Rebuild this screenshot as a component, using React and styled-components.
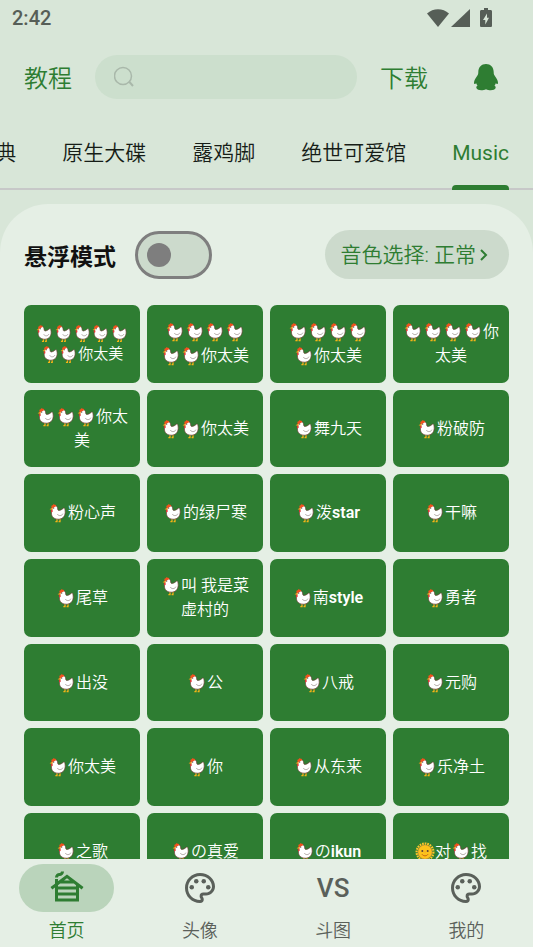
import React, { useState } from 'react';
import styled, { createGlobalStyle } from 'styled-components';
import { MdOutlineCabin, MdOutlinePalette } from 'react-icons/md';

const tabs = ['典', '原生大碟', '露鸡脚', '绝世可爱馆', 'Music'];

// each sound is a list of lines, 🐔 and 🌞 are swapped for drawn icons
const sounds = [
  { lines: ['🐔🐔🐔🐔🐔', '🐔🐔你太美'], small: true },
  { lines: ['🐔🐔🐔🐔', '🐔🐔你太美'] },
  { lines: ['🐔🐔🐔🐔', '🐔你太美'] },
  { lines: ['🐔🐔🐔🐔你', '太美'] },
  { lines: ['🐔🐔🐔你太', '美'] },
  { lines: ['🐔🐔你太美'] },
  { lines: ['🐔舞九天'] },
  { lines: ['🐔粉破防'] },
  { lines: ['🐔粉心声'] },
  { lines: ['🐔的绿尸寒'] },
  { lines: ['🐔泼star'] },
  { lines: ['🐔干嘛'] },
  { lines: ['🐔尾草'] },
  { lines: ['🐔叫 我是菜', '虚村的'] },
  { lines: ['🐔南style'] },
  { lines: ['🐔勇者'] },
  { lines: ['🐔出没'] },
  { lines: ['🐔公'] },
  { lines: ['🐔八戒'] },
  { lines: ['🐔元购'] },
  { lines: ['🐔你太美'] },
  { lines: ['🐔你'] },
  { lines: ['🐔从东来'] },
  { lines: ['🐔乐净土'] },
  { lines: ['🐔之歌'] },
  { lines: ['🐔の真爱'] },
  { lines: ['🐔のikun'] },
  { lines: ['🌞对🐔找'] },
];

const navs = [
  { label: '首页', icon: <MdOutlineCabin size={36} /> },
  { label: '头像', icon: <MdOutlinePalette size={36} /> },
  { label: '斗图', icon: 'VS' },
  { label: '我的', icon: <MdOutlinePalette size={36} /> },
];

const Chicken = () => (
  <Emoji viewBox="0 0 20 20" aria-label="鸡">
    <path d="M9 15.800v2.700M12 15.800v2.700M7.400 18.600h2.200M10.600 18.600h2" stroke="#f5b417" strokeWidth="1.300" fill="none" />
    <path
      d="M3.800 5.400C4.200 3.200 5.400 2.300 7 2.500c1.900.2 2.600 1.700 2.700 3.400 0 1.200.7 1.700 1.700 1.500 1.600-.3 2.600-1.100 3.700-2 .9-.7 1.700-.1 1.800.900.1 1 .5 2 .3 3.500-.5 4-3 6.400-6.800 6.400-4.300 0-7-2.500-7-6.300 0-1.900.8-2.800.4-4.500z"
      fill="#fff"
      stroke="#6d3b34"
      strokeWidth=".7"
    />
    <path d="M9.300 11c1.100 2.200 4.400 2.200 5.600-.3" fill="none" stroke="#a0938f" strokeWidth=".8" />
    <path d="M3.500 4.700C3 2.900 3.900 2.200 4.700 2.400 4.800 1.100 6.300.9 6.700 1.800c1.100-.5 1.800.5 1.300 1.500L4.500 5.200z" fill="#f4511e" />
    <path d="M4.600 4.600 1.600 6.300l2.900.7z" fill="#fb9b1c" />
    <path d="M3.500 6.700c-1.100.9-.7 2.500.4 2.500.9 0 1-1.400.5-2.300z" fill="#e53935" />
    <circle cx="5.700" cy="5.100" r=".6" fill="#3e2723" />
  </Emoji>
);

const Sun = () => (
  <Emoji viewBox="0 0 20 20" aria-label="太阳">
    <circle cx="10" cy="10" r="8.400" fill="none" stroke="#fdc52c" strokeWidth="2.200" strokeDasharray="1.700 .9" />
    <circle cx="10" cy="10" r="7" fill="#fcc21b" stroke="#f19534" strokeWidth=".6" />
    <circle cx="7.300" cy="9" r="1" fill="#5d4037" />
    <circle cx="12.700" cy="9" r="1" fill="#5d4037" />
    <path d="M9.300 9.500 10 11l.7-1.500" fill="#f19534" />
    <path d="M7 12.300c1.500 2 4.500 2 6 0" fill="none" stroke="#c65f13" strokeWidth="1" />
  </Emoji>
);

const renderLine = (line) =>
  line.split(/(🐔|🌞|[a-z]+)/u).map((part, i) => {
    if (part === '🐔') return <Chicken key={i} />;
    if (part === '🌞') return <Sun key={i} />;
    if (/^[a-z]+$/.test(part)) return <Latin key={i}>{part}</Latin>;
    return part;
  });

const App = () => {
  const [active, setActive] = useState('Music');
  const [page, setPage] = useState('首页');
  const [floating, setFloating] = useState(false);

  return (
    <Screen>
      <GlobalStyle />
      <StatusBar>
        <span>2:42</span>
        <StatusIcons>
          <svg width="22" height="20" viewBox="0 0 22 20">
            <path d="M0 5.500C6.200-.2 15.800-.2 22 5.500L11 19z" fill="currentColor" />
          </svg>
          <svg width="19" height="20" viewBox="0 0 19 20">
            <path d="M19 1v18H0z" fill="currentColor" />
          </svg>
          <Battery width="12" height="20" viewBox="0 0 12 20">
            <path
              fillRule="evenodd"
              d="M4 0h4v2h2.500C11.500 2 12 2.600 12 3.500v14c0 1-.5 1.500-1.500 1.500h-9C.5 19 0 18.500 0 17.500v-14C0 2.600.5 2 1.500 2H4zM7 5.500 3 12h2.300v4.500L9 9.700H7z"
              fill="currentColor"
            />
          </Battery>
        </StatusIcons>
      </StatusBar>

      <Header>
        <HeaderLink href="#guide">教程</HeaderLink>
        <SearchBar>
          <svg width="22" height="22" viewBox="0 0 22 22" fill="none" stroke="#a9b8aa" strokeWidth="1.500">
            <circle cx="9" cy="10" r="8.500" />
            <path d="M15 15.500 19 20" strokeWidth="2" />
          </svg>
          <SearchInput type="text" aria-label="搜索" />
        </SearchBar>
        <HeaderLink href="#download">下载</HeaderLink>
        <QqButton type="button" aria-label="QQ">
          <svg width="24" height="27" viewBox="0 0 24 27">
            <path
              d="M12 0c4.600 0 7.600 3.200 7.700 8 0 1.400.1 2.400.9 3.600 1.800 2.600 3.400 5 3.400 7.200 0 1.500-1 1.700-2.200.5-.3 1-.7 1.700-1.300 2.500 1.200.6 1.400 1.500 1 2.500-.7 2.300-6.500 2.500-9.500.9-3 1.600-8.800 1.400-9.500-.9-.4-1-.2-1.900 1-2.500-.6-.8-1-1.500-1.300-2.500C1 20.500 0 20.300 0 18.800c0-2.200 1.600-4.600 3.400-7.200.8-1.200.9-2.200.9-3.600C4.400 3.200 7.400 0 12 0z"
              fill="currentColor"
            />
          </svg>
        </QqButton>
      </Header>

      <Tabs>
        {tabs.map((tab) => (
          <Tab key={tab} type="button" $latin={tab === 'Music'} $active={tab === active} onClick={() => setActive(tab)}>
            {tab}
          </Tab>
        ))}
      </Tabs>

      <Panel>
        <Options>
          <FloatLabel>
            悬浮模式
            <Switch type="checkbox" role="switch" checked={floating} onChange={() => setFloating(!floating)} />
          </FloatLabel>
          <ToneButton type="button">
            音色选择: 正常
            <svg width="8" height="12" viewBox="0 0 8 12" fill="none" stroke="currentColor" strokeWidth="2">
              <path d="M1 1l5 5-5 5" />
            </svg>
          </ToneButton>
        </Options>

        <Grid>
          {sounds.map((sound, i) => (
            <Sound key={i} type="button" $small={sound.small}>
              {sound.lines.map((line) => (
                <SoundLine key={line} $small={sound.small}>
                  {renderLine(line)}
                </SoundLine>
              ))}
            </Sound>
          ))}
        </Grid>
      </Panel>

      <BottomNav>
        {navs.map(({ label, icon }) => (
          <NavItem key={label} type="button" $active={label === page} onClick={() => setPage(label)}>
            <NavIcon $active={label === page}>{icon}</NavIcon>
            {label}
          </NavItem>
        ))}
      </BottomNav>
    </Screen>
  );
};

export default App;

const GlobalStyle = createGlobalStyle`
  * {
    box-sizing: border-box;
  }
  body {
    margin: 0;
    background: #d8e6d8;
    font-family: Roboto, 'Noto Sans CJK SC', sans-serif;
    font-weight: 350;
  }
  button, input {
    font-family: inherit;
    font-weight: inherit;
    border: none;
    padding: 0;
    background: none;
  }
`;

const Screen = styled.div`
  display: flex;
  flex-direction: column;
  height: 100vh;
  overflow: hidden;
`;

const StatusBar = styled.div`
  display: flex;
  justify-content: space-between;
  align-items: center;
  height: 36px;
  flex-shrink: 0;
  padding: 0 41px 0 12px;
  font-size: 20px;
  font-weight: 500;
  color: #565e57;
`;

const StatusIcons = styled.div`
  display: flex;
  align-items: center;
  gap: 2px;
`;

const Battery = styled.svg`
  margin-left: 8px;
`;

const Header = styled.header`
  display: flex;
  align-items: center;
  gap: 23px;
  height: 82px;
  flex-shrink: 0;
  padding: 0 12px 0 24px;
`;

const HeaderLink = styled.a`
  padding-top: 4px;
  font-size: 24px;
  line-height: 32px;
  color: #2e7d32;
  text-decoration: none;
  white-space: nowrap;
`;

const SearchBar = styled.label`
  display: flex;
  align-items: center;
  flex: 1;
  min-width: 0;
  height: 44px;
  padding: 0 19px;
  border-radius: 22px;
  background: #ccdfcd;
`;

const SearchInput = styled.input`
  flex: 1;
  min-width: 0;
  padding: 0 8px;
  font-size: 20px;
  &:focus {
    outline: none;
  }
`;

const QqButton = styled.button`
  display: flex;
  justify-content: center;
  width: 70px;
  color: #2e7d32;
`;

const Tabs = styled.nav`
  display: flex;
  justify-content: flex-end;
  gap: 46px;
  height: 72px;
  flex-shrink: 0;
  padding: 0 24px;
  overflow: hidden;
  box-shadow: inset 0 -2px #c7c8c8;
`;

const Tab = styled.button`
  display: flex;
  flex-direction: column;
  flex-shrink: 0;
  padding-top: 19px;
  font-size: 21px;
  font-weight: ${(props) => (props.$latin ? 400 : 350)};
  line-height: 32px;
  color: ${(props) => (props.$active ? '#2e7d32' : '#161d17')};
  &::after {
    content: '';
    width: 100%;
    height: 5px;
    margin-top: auto;
    border-radius: 4px 4px 0 0;
    background: ${(props) => (props.$active ? '#2e7d32' : 'transparent')};
  }
`;

const Panel = styled.main`
  flex: 1;
  min-height: 0;
  margin-top: 14px;
  padding: 26px 24px 0;
  overflow-y: auto;
  scrollbar-width: none;
  border-radius: 48px 48px 0 0;
  background: #e5efe5;
`;

const Options = styled.div`
  display: flex;
  justify-content: space-between;
  align-items: center;
  margin-bottom: 26px;
`;

const FloatLabel = styled.label`
  display: flex;
  align-items: center;
  gap: 19px;
  font-size: 23px;
  font-weight: bold;
  color: #111;
`;

const Switch = styled.input`
  appearance: none;
  display: flex;
  align-items: center;
  width: 77px;
  height: 48px;
  margin: 0;
  padding: 0 9px;
  border: 3px solid #7e7e7e;
  border-radius: 24px;
  background: #ccdacc;
  &::before {
    content: '';
    width: 24px;
    height: 24px;
    border-radius: 50%;
    background: #7e7e7e;
  }
  &:checked {
    justify-content: flex-end;
  }
`;

const ToneButton = styled.button`
  display: flex;
  align-items: center;
  gap: 4px;
  height: 49px;
  padding: 0 21px 0 15px;
  border-radius: 25px;
  background: #ccdacc;
  font-size: 21px;
  line-height: 24px;
  color: #2e7d32;
`;

const Grid = styled.div`
  display: grid;
  grid-template-columns: repeat(4, 1fr);
  gap: 7px;
`;

const Sound = styled.button`
  display: flex;
  flex-direction: column;
  justify-content: center;
  align-items: center;
  aspect-ratio: 112 / 75;
  border-radius: 7px;
  background: #2e7d32;
  font-size: ${(props) => (props.$small ? '15px' : '16px')};
  color: #fff;
`;

const SoundLine = styled.span`
  display: flex;
  align-items: center;
  height: ${(props) => (props.$small ? '21px' : '24px')};
  line-height: ${(props) => (props.$small ? '21px' : '24px')};
  white-space: pre;
`;

const Latin = styled.strong`
  font-weight: 600;
`;

const Emoji = styled.svg`
  width: 1.25em;
  height: 1.25em;
`;

const BottomNav = styled.nav`
  display: grid;
  grid-template-columns: repeat(4, 1fr);
  height: 88px;
  flex-shrink: 0;
  background: #e5efe5;
`;

const NavItem = styled.button`
  display: flex;
  flex-direction: column;
  align-items: center;
  gap: 6px;
  padding-top: 5px;
  font-size: 18px;
  line-height: 26px;
  color: ${(props) => (props.$active ? '#2e7d32' : '#5a605a')};
`;

const NavIcon = styled.span`
  display: flex;
  justify-content: center;
  align-items: center;
  width: 95px;
  height: 48px;
  border-radius: 24px;
  background: ${(props) => (props.$active ? '#bad4bb' : 'transparent')};
  font-size: 26px;
  font-weight: 500;
`;
